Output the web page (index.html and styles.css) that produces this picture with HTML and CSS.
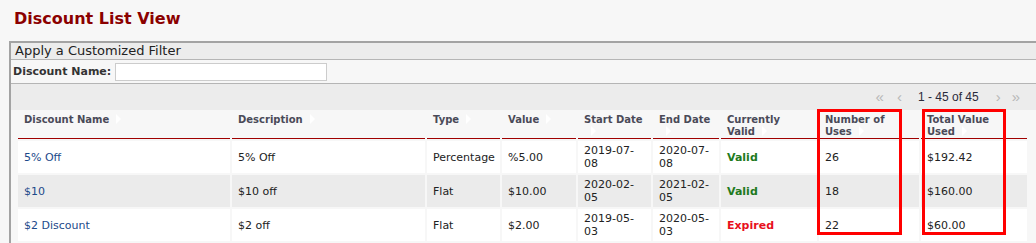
FILE: index.html
```html
<!DOCTYPE html>
<html>
<head>
<meta charset="utf-8">
<link rel="stylesheet" href="styles.css">
</head>
<body>
<h1 class="title">Discount List View</h1>
<div class="panel">
  <div class="panel-head">Apply a Customized Filter</div>
  <div class="filter-row">
    <label class="filter-label">Discount Name:</label>
    <input class="filter-input" type="text">
  </div>
  <div class="grid">
    <div class="pager">
      <span class="pg-arrow pg-first">«</span>
      <span class="pg-arrow pg-prev">‹</span>
      <span class="pg-info">1 - 45 of 45</span>
      <span class="pg-arrow pg-next">›</span>
      <span class="pg-arrow pg-last">»</span>
    </div>
    <table class="list">
      <colgroup>
        <col class="c1"><col class="c2"><col class="c3"><col class="c4"><col class="c5"><col class="c6"><col class="c7"><col class="c8"><col class="c9">
      </colgroup>
      <thead>
        <tr>
          <th>Discount Name<span class="sort"></span></th>
          <th>Description<span class="sort"></span></th>
          <th>Type<span class="sort"></span></th>
          <th>Value<span class="sort"></span></th>
          <th>Start Date<span class="sort"></span></th>
          <th>End Date<span class="sort"></span></th>
          <th>Currently Valid<span class="sort"></span></th>
          <th>Number of Uses<span class="sort"></span></th>
          <th class="th-total">Total Value Used<span class="sort"></span></th>
        </tr>
      </thead>
      <tbody>
        <tr class="odd">
          <td><a class="link">5% Off</a></td>
          <td>5% Off</td>
          <td>Percentage</td>
          <td>%5.00</td>
          <td>2019-07-08</td>
          <td>2020-07-08</td>
          <td class="valid">Valid</td>
          <td>26</td>
          <td>$192.42</td>
        </tr>
        <tr class="even">
          <td><a class="link">$10</a></td>
          <td>$10 off</td>
          <td>Flat</td>
          <td>$10.00</td>
          <td>2020-02-05</td>
          <td>2021-02-05</td>
          <td class="valid">Valid</td>
          <td>18</td>
          <td>$160.00</td>
        </tr>
        <tr class="odd">
          <td><a class="link">$2 Discount</a></td>
          <td>$2 off</td>
          <td>Flat</td>
          <td>$2.00</td>
          <td>2019-05-03</td>
          <td>2020-05-03</td>
          <td class="expired">Expired</td>
          <td>22</td>
          <td>$60.00</td>
        </tr>
      </tbody>
    </table>
  </div>
</div>
<div class="mark mark-uses"></div>
<div class="mark mark-total"></div>
</body>
</html>
```

FILE: styles.css
```css
html, body {
  margin: 0;
  padding: 0;
  background: #f7f7f7;
  overflow: hidden;
}
body {
  font-family: "DejaVu Sans", Verdana, sans-serif;
  color: #222;
  width: 1036px;
  height: 243px;
  position: relative;
}
.title {
  margin: 0;
  padding: 9px 0 0 14px;
  height: 41px;
  box-sizing: border-box;
  font-size: 16px;
  font-weight: bold;
  color: #8b0000;
  line-height: 20px;
}
.panel {
  margin-left: 9px;
  border-top: 2px solid #a3a3a3;
  border-left: 2px solid #a3a3a3;
}
.panel-head {
  background: #ececec;
  height: 16px;
  line-height: 16px;
  font-size: 13px;
  padding-left: 4px;
  border-bottom: 1px solid #b5b5b5;
  color: #222;
}
.filter-row {
  display: flex;
  align-items: center;
  height: 23px;
  border-bottom: 1px solid #b5b5b5;
  padding-left: 2px;
}
.filter-label {
  font-size: 11px;
  font-weight: bold;
  color: #333;
  margin-right: 4px;
}
.filter-input {
  width: 212px;
  height: 18px;
  box-sizing: border-box;
  border: 1px solid #cccccc;
  background: #fff;
  margin: 0;
  padding: 0;
}
.pager {
  background: #ececec;
  height: 26px;
  display: flex;
  align-items: center;
  justify-content: flex-end;
  padding-right: 16px;
  font-family: "Liberation Sans", Arial, sans-serif;
}
.pg-arrow {
  color: #b8b8b8;
  font-size: 15px;
  line-height: 16px;
}
.pg-prev { margin-left: 13px; }
.pg-next { margin-left: 17px; }
.pg-last { margin-left: 11px; }
.pg-info {
  font-size: 12px;
  color: #2a2a3a;
  margin-left: 16px;
}
.list {
  margin-left: 5px;
  border-spacing: 2px;
  table-layout: fixed;
  width: 1013px;
}
.c1 { width: 212px; }
.c2 { width: 193px; }
.c3 { width: 73px; }
.c4 { width: 74px; }
.c5 { width: 73px; }
.c6 { width: 66px; }
.c7 { width: 96px; }
.c8 { width: 100px; }
.c9 { width: 106px; }
.list th {
  text-align: left;
  vertical-align: top;
  font-weight: bold;
  font-size: 10px;
  color: #4a4a58;
  padding: 2px 6px 0 6px;
  height: 23px;
  line-height: 12px;
  border-bottom: 1px solid #a00000;
  background: #f7f7f7;
}
.list th.th-total {
  padding-right: 16px;
}
.sort {
  display: inline-block;
  width: 0;
  height: 0;
  border-top: 5px solid transparent;
  border-bottom: 5px solid transparent;
  border-left: 5px solid #ffffff;
  margin-left: 7px;
  vertical-align: -1px;
}
.list td {
  padding: 3px 6px;
  height: 26px;
  line-height: 13px;
  vertical-align: middle;
  color: #222;
  font-size: 11px;
}
.odd td { background: #ffffff; }
.even td { background: #ebebeb; }
.link {
  color: #1c4a8a;
  text-decoration: none;
}
.list td.valid {
  color: #217a1d;
  font-weight: bold;
}
.list td.expired {
  color: #e8101c;
  font-weight: bold;
}
.mark {
  position: absolute;
  border: 3px solid #ff0000;
  top: 109px;
  height: 120px;
}
.mark-uses {
  left: 817px;
  width: 79px;
}
.mark-total {
  left: 922px;
  width: 78px;
}
```
